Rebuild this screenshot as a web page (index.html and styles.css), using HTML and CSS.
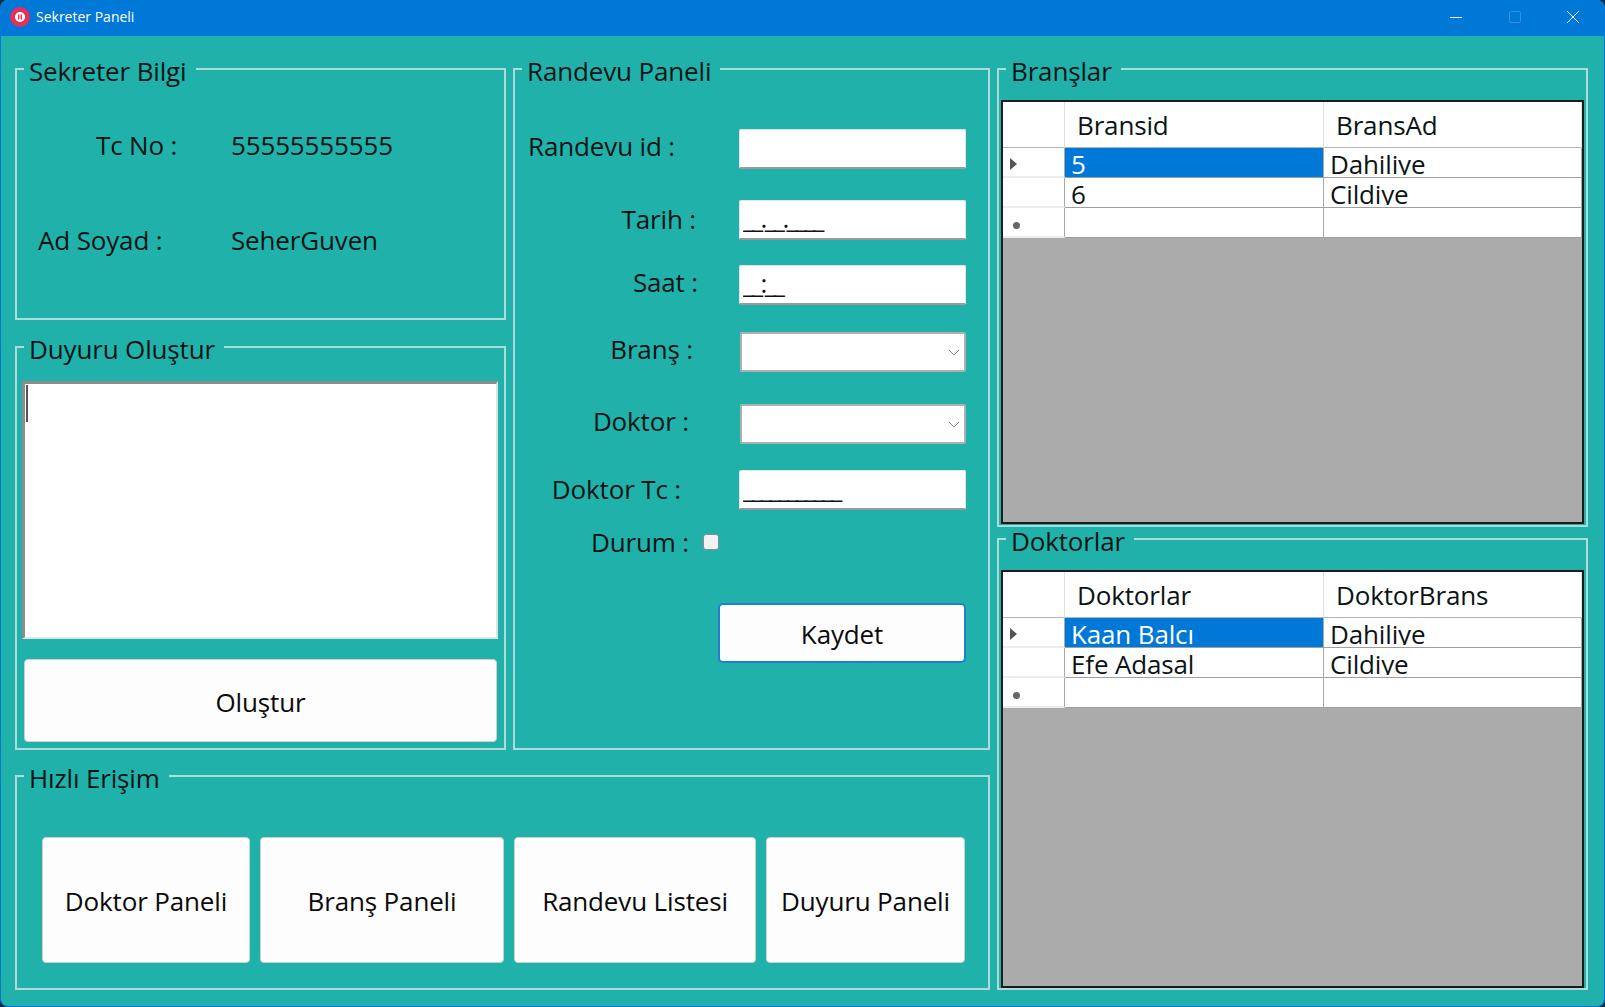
FILE: index.html
```html
<!DOCTYPE html>
<html lang="tr">
<head>
    <meta charset="UTF-8">
    <title>Sekreter Paneli</title>
    <link rel="stylesheet" href="styles.css">
</head>
<body>
    <div class="window">
        <header class="titlebar">
            <svg class="app-icon" width="20" height="20" viewBox="0 0 20 20">
                <circle cx="10" cy="10" r="10" fill="#e5305a"/>
                <circle cx="10" cy="10" r="5" fill="#fff"/>
                <rect x="8" y="7.5" width="1.4" height="5" fill="#e5305a"/>
                <rect x="10.6" y="7.5" width="1.4" height="5" fill="#e5305a"/>
            </svg>
            <span class="app-title">Sekreter Paneli</span>
            <div class="win-buttons">
                <svg class="win-btn" width="14" height="14" viewBox="0 0 14 14"><path d="M1 7.5h12" stroke="#fff" fill="none"/></svg>
                <svg class="win-btn" width="14" height="14" viewBox="0 0 14 14"><rect x="1.5" y="1.5" width="11" height="11" rx="1.5" stroke="#3a8ddb" fill="none"/></svg>
                <svg class="win-btn" width="14" height="14" viewBox="0 0 14 14"><path d="M1 1l12 12M13 1L1 13" stroke="#fff" fill="none"/></svg>
            </div>
        </header>

        <main class="desk">
            <div class="left-side">
                <div class="top-area">
                    <div class="left-col">
                        <fieldset class="group group-info">
                            <legend>Sekreter Bilgi</legend>
                            <div class="info-row info-tc">
                                <span class="info-label">Tc No :</span>
                                <span class="info-value">55555555555</span>
                            </div>
                            <div class="info-row info-ad">
                                <span class="info-label">Ad Soyad :</span>
                                <span class="info-value">SeherGuven</span>
                            </div>
                        </fieldset>

                        <fieldset class="group group-notice">
                            <legend>Duyuru Oluştur</legend>
                            <div class="notice-box">
                                <textarea class="notice-text"></textarea>
                                <span class="caret"></span>
                            </div>
                            <button class="btn btn-create">Oluştur</button>
                        </fieldset>
                    </div>

                    <fieldset class="group group-form">
                        <legend>Randevu Paneli</legend>
                        <div class="form-row row-id">
                            <label class="lbl-id">Randevu id :</label>
                            <input class="field" type="text">
                        </div>
                        <div class="form-row row-date">
                            <label class="lbl-date">Tarih :</label>
                            <input class="field mask" type="text" value="__.__.____">
                        </div>
                        <div class="form-row row-time">
                            <label class="lbl-time">Saat :</label>
                            <input class="field mask" type="text" value="__:__">
                        </div>
                        <div class="form-row row-branch">
                            <label class="lbl-branch">Branş :</label>
                            <div class="combo">
                                <svg width="12" height="7" viewBox="0 0 12 7"><path d="M1 1l5 5 5-5" stroke="#8a8a8a" fill="none"/></svg>
                            </div>
                        </div>
                        <div class="form-row row-doctor">
                            <label class="lbl-doctor">Doktor :</label>
                            <div class="combo">
                                <svg width="12" height="7" viewBox="0 0 12 7"><path d="M1 1l5 5 5-5" stroke="#8a8a8a" fill="none"/></svg>
                            </div>
                        </div>
                        <div class="form-row row-tc">
                            <label class="lbl-tc">Doktor Tc :</label>
                            <input class="field mask" type="text" value="___________">
                        </div>
                        <div class="form-row row-state">
                            <label class="lbl-state">Durum :</label>
                            <span class="check"></span>
                        </div>
                        <div class="save-row">
                            <button class="btn btn-save">Kaydet</button>
                        </div>
                    </fieldset>
                </div>

                <fieldset class="group group-quick">
                    <legend>Hızlı Erişim</legend>
                    <div class="quick-row">
                        <button class="btn quick-doktor">Doktor Paneli</button>
                        <button class="btn quick-brans">Branş Paneli</button>
                        <button class="btn quick-randevu">Randevu Listesi</button>
                        <button class="btn quick-duyuru">Duyuru Paneli</button>
                    </div>
                </fieldset>
            </div>

            <div class="right-col">
                <fieldset class="group group-branches">
                    <legend>Branşlar</legend>
                    <div class="grid">
                        <div class="grid-row grid-head">
                            <div class="row-head"></div>
                            <div class="head-cell">Bransid</div>
                            <div class="head-cell">BransAd</div>
                        </div>
                        <div class="grid-row">
                            <div class="row-head"><span class="arrow"></span></div>
                            <div class="cell selected"><span class="cell-text">5</span></div>
                            <div class="cell"><span class="cell-text">Dahiliye</span></div>
                        </div>
                        <div class="grid-row">
                            <div class="row-head"></div>
                            <div class="cell"><span class="cell-text">6</span></div>
                            <div class="cell"><span class="cell-text">Cildiye</span></div>
                        </div>
                        <div class="grid-row">
                            <div class="row-head"><span class="star"></span></div>
                            <div class="cell"></div>
                            <div class="cell"></div>
                        </div>
                    </div>
                </fieldset>

                <fieldset class="group group-doctors">
                    <legend>Doktorlar</legend>
                    <div class="grid">
                        <div class="grid-row grid-head">
                            <div class="row-head"></div>
                            <div class="head-cell">Doktorlar</div>
                            <div class="head-cell">DoktorBrans</div>
                        </div>
                        <div class="grid-row">
                            <div class="row-head"><span class="arrow"></span></div>
                            <div class="cell selected"><span class="cell-text">Kaan Balcı</span></div>
                            <div class="cell"><span class="cell-text">Dahiliye</span></div>
                        </div>
                        <div class="grid-row">
                            <div class="row-head"></div>
                            <div class="cell"><span class="cell-text">Efe Adasal</span></div>
                            <div class="cell"><span class="cell-text">Cildiye</span></div>
                        </div>
                        <div class="grid-row">
                            <div class="row-head"><span class="star"></span></div>
                            <div class="cell"></div>
                            <div class="cell"></div>
                        </div>
                    </div>
                </fieldset>
            </div>
        </main>
    </div>
</body>
</html>
```

FILE: styles.css
```css
* {
    box-sizing: border-box;
}
html, body {
    margin: 0;
    padding: 0;
    height: 100%;
    background: #0b2a4a;
    overflow: hidden;
}
body {
    font-family: "Open Sans", "Noto Sans", sans-serif;
    font-size: 26px;
    letter-spacing: -0.15px;
    color: #0a1414;
}
.window {
    width: 1605px;
    height: 1007px;
    background: #20b2aa;
    border: solid #0078d7;
    border-width: 0 1px 1px 1px;
    border-radius: 8px;
    overflow: hidden;
    display: flex;
    flex-direction: column;
}

/* title bar */
.titlebar {
    height: 36px;
    flex-shrink: 0;
    background: #0078d7;
    display: flex;
    align-items: center;
    padding: 0 0 3px 9px;
    color: white;
}
.app-icon {
    margin-right: 6px;
}
.app-title {
    font-size: 14px;
    letter-spacing: 0;
}
.win-buttons {
    margin-left: auto;
    display: flex;
    gap: 44.5px;
    padding-right: 24px;
}

/* layout */
.desk {
    flex: 1;
    display: flex;
    gap: 7px;
    padding: 23px 0 0 14px;
}
.left-side {
    width: 975px;
    display: flex;
    flex-direction: column;
    gap: 16px;
}
.top-area {
    display: flex;
    gap: 7px;
}
.left-col {
    width: 491px;
    display: flex;
    flex-direction: column;
    gap: 17px;
}
.right-col {
    width: 591px;
    display: flex;
    flex-direction: column;
    gap: 2px;
}

/* group boxes */
.group {
    margin: 0;
    padding: 0;
    min-width: 0;
    border: 2px solid #aedbd7;
}
.group legend {
    line-height: 24px;
    height: 20px;
    padding: 0 9px 0 5px;
    margin-left: 7px;
    white-space: nowrap;
}
.group-info {
    height: 261px;
}
.group-notice {
    height: 413px;
}
.group-form {
    width: 477px;
    height: 691px;
}
.group-quick {
    height: 224px;
}
.group-branches {
    height: 468px;
}
.group-doctors {
    height: 461px;
}

/* sekreter */
.info-row {
    display: grid;
    grid-template-columns: 214px auto;
    line-height: 36px;
}
.info-tc {
    margin-top: 48px;
}
.info-tc .info-label {
    padding-left: 79px;
}
.info-ad {
    margin-top: 59px;
}
.info-ad .info-label {
    padding-left: 21px;
}

/* duyuru */
.notice-box {
    position: relative;
    margin: 24px 5px 0;
}
.notice-text {
    display: block;
    width: 476px;
    height: 258px;
    border: 2px solid;
    border-width: 3px 2px 2px 3px;
    border-color: #8c8c8c #e2e2e2 #e2e2e2 #8c8c8c;
    background: white;
    resize: none;
    outline: none;
}
.caret {
    position: absolute;
    left: 4px;
    top: 4px;
    width: 2px;
    height: 37px;
    background: #555;
}

/* buttons */
.btn {
    font-family: inherit;
    font-size: 26px;
    letter-spacing: inherit;
    color: #0a0a0a;
    background: #fdfdfd;
    border: 1px solid #d0d0d0;
    border-radius: 4px;
    padding: 2px 0 0;
}
.btn-create {
    display: block;
    width: 473px;
    height: 83px;
    margin: 20px 0 0 7px;
}
.btn-save {
    width: 248px;
    height: 60px;
    border: 2px solid #1f7fd4;
    border-radius: 5px;
}
.save-row {
    display: flex;
    justify-content: flex-end;
    padding-right: 22px;
    margin-top: 43px;
}
.quick-row {
    display: flex;
    gap: 10px;
    margin-top: 51px;
    padding-left: 25px;
}
.quick-row .btn {
    height: 126px;
}
.quick-doktor { width: 208px; }
.quick-brans { width: 244px; }
.quick-randevu { width: 242px; }
.quick-duyuru { width: 199px; }

/* randevu form */
.form-row {
    display: flex;
    align-items: flex-start;
    justify-content: flex-end;
    padding-right: 22px;
}
.form-row label {
    white-space: nowrap;
    margin-top: -1px;
}
.form-row .lbl-date, .form-row .lbl-tc {
    margin-top: 1px;
}
.field, .combo {
    width: 227px;
    height: 40px;
    flex-shrink: 0;
    background: white;
    border: 1px solid #e4e4e4;
    border-bottom: 2px solid #9a9a9a;
    border-radius: 2px;
    padding: 0;
}
.mask {
    font-family: inherit;
    font-size: 26px;
    letter-spacing: -2.6px;
    padding: 0 0 4px 3px;
    color: #111;
}
.combo {
    border: 2px solid #b0b0b0;
    width: 226px;
    display: flex;
    align-items: center;
    justify-content: flex-end;
    padding-right: 4px;
}
.row-id { margin-top: 50px; }
.row-date { margin-top: 31px; }
.row-time { margin-top: 25px; }
.row-branch { margin-top: 27px; }
.row-doctor { margin-top: 32px; }
.row-tc { margin-top: 26px; }
.row-state {
    justify-content: flex-start;
    height: 35px;
    padding-left: 76px;
    margin-top: 15px;
}
.lbl-id { margin-right: 64px; }
.lbl-date { margin-right: 43px; }
.lbl-time { margin-right: 41px; }
.lbl-branch { margin-right: 47px; }
.lbl-doctor { margin-right: 51px; }
.lbl-tc { margin-right: 58px; }
.lbl-state { margin-right: 14px; }
.check {
    width: 16px;
    height: 16px;
    margin-top: 9px;
    background: #f2f2f2;
    border: 1px solid #8a8a8a;
    border-radius: 3px;
}

/* data grids */
.grid {
    margin: 21px 2px 0;
    height: 424px;
    background: #ababab;
    border: 2px solid #1c1c1c;
}
.group-doctors .grid {
    height: 418px;
}
.grid-row {
    display: grid;
    grid-template-columns: 62px 259px 1fr;
    height: 30px;
}
.grid-head {
    height: 46px;
}
.row-head {
    background: white;
    border-right: 1px solid #a9a9a9;
    border-bottom: 2px solid #ececec;
    display: flex;
    align-items: center;
    padding: 3px 0 0 7px;
}
.grid-head .row-head {
    border-right-color: #e0e0e0;
    border-bottom-color: #b4b4b4;
}
.head-cell {
    background: white;
    line-height: 44px;
    padding: 1px 0 0 12px;
    border-right: 1px solid #e0e0e0;
    border-bottom: 2px solid #b4b4b4;
}
.cell {
    background: white;
    line-height: 32px;
    padding-left: 6px;
    border-right: 1px solid #a9a9a9;
    border-bottom: 1px solid #a0a0a0;
}
.cell-text {
    display: block;
    height: 27px;
    overflow: hidden;
}
.selected {
    background: #0078d7;
    color: white;
}
.arrow {
    width: 0;
    height: 0;
    border-left: 7px solid #555;
    border-top: 6px solid transparent;
    border-bottom: 6px solid transparent;
}
.star {
    width: 7px;
    height: 7px;
    margin: 4px 0 0 3px;
    border-radius: 50%;
    background: #666;
}
```
